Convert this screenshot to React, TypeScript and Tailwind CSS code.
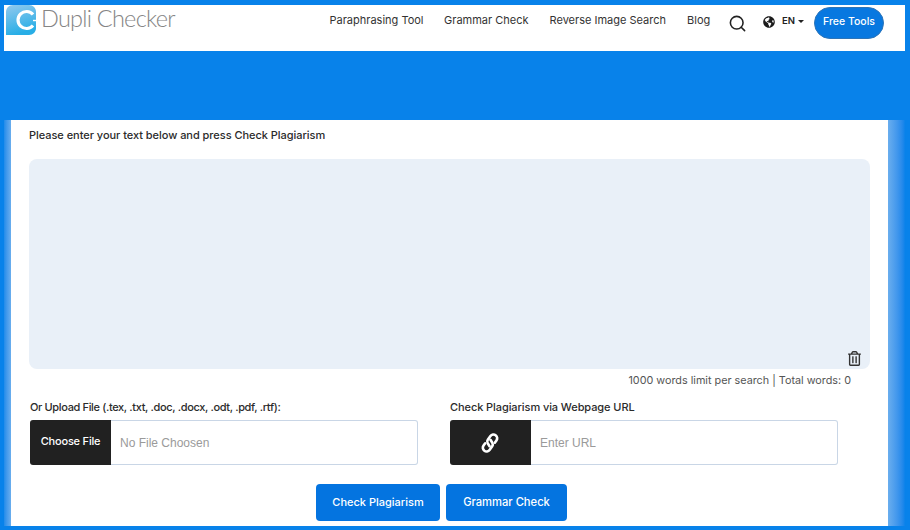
import { Search } from 'lucide-react'
import { FaGlobeAmericas, FaRegTrashAlt } from 'react-icons/fa'

const navLinks = [
  { label: 'Paraphrasing Tool', width: 'w-[96px]' },
  { label: 'Grammar Check', width: 'w-[87px]' },
  { label: 'Reverse Image Search', width: 'w-[119px]' },
  { label: 'Blog', width: 'w-[23px]' },
]

function Logo() {
  return (
    <div className="flex items-start gap-[5px] pl-[2px]">
      <svg width="30" height="30" viewBox="0 0 30 30" aria-hidden="true">
        <defs>
          <linearGradient id="logoBg" x1="0" y1="0" x2="0.3" y2="1">
            <stop offset="0" stopColor="#93c9ee" />
            <stop offset="1" stopColor="#28aee6" />
          </linearGradient>
        </defs>
        <path d="M7 0H23C27 0 30 3 30 7V23C30 27 27 30 23 30H0V7C0 3 3 0 7 0Z" fill="url(#logoBg)" />
        <path d="M27 9.5A8.5 8.5 0 1 0 27 20.5" fill="none" stroke="#fff" strokeWidth="3.2" />
        <path d="M27 15.5H30" stroke="#fff" strokeWidth="1.4" />
      </svg>
      <span className="-mt-[2px] font-['Lato',sans-serif] text-[23.5px] leading-[30px] font-light tracking-[-0.75px] text-[#858585]">
        Dupli Checker
      </span>
    </div>
  )
}

function LinkIcon() {
  return (
    <svg width="24" height="24" viewBox="-11 -11 22 22" className="-translate-x-[1px]" aria-hidden="true">
      <g transform="rotate(36)" fill="none" stroke="#fff" strokeWidth="2.4" strokeLinecap="round" strokeLinejoin="round">
        <path d="M1.4 2.6L-1.6 1.4Q-3.4 0.6 -3.4 -1.2V-5.4a3.4 3.4 0 0 1 6.8 0V-2.8" />
        <path d="M-1.4 -2.6L1.6 -1.4Q3.4 -0.6 3.4 1.2V5.4a3.4 3.4 0 0 1 -6.8 0V2.8" />
      </g>
    </svg>
  )
}

function Header() {
  return (
    <header className="ml-[4px] flex h-[46px] w-[901px] items-start bg-white">
      <Logo />
      <nav className="ml-auto flex items-center pt-[2px]">
        <ul className="flex h-[26px] items-center gap-[18.5px] self-start text-[11px] text-[#333333]">
          {navLinks.map((link) => (
            <li key={link.label} className={`${link.width} whitespace-nowrap`}>
              {link.label}
            </li>
          ))}
        </ul>
        <Search className="ml-[18px] h-[19px] w-[19px] text-[#222222]" strokeWidth={2} />
        <div className="flex h-[29px] items-center self-start">
          <FaGlobeAmericas className="ml-[16px] h-[12px] w-[12px] text-[#1c1c1c]" />
          <span className="ml-[7px] text-[9.5px] font-semibold text-[#222222]">EN</span>
          <span className="ml-[3px] h-0 w-0 border-x-[3px] border-t-[3px] border-x-transparent border-t-[#222222]" />
        </div>
        <button className="mr-[21px] ml-[10px] h-[32px] w-[70px] rounded-full border border-[#2d74b8] bg-[#0878e0] pb-[3px] text-[10.5px] font-medium text-white">
          Free Tools
        </button>
      </nav>
    </header>
  )
}

function FileField() {
  return (
    <div className="w-[388px]">
      <label className="block text-[11px] leading-[14px] font-medium tracking-[-0.35px] text-[#2b2b2b]">
        Or Upload File (.tex, .txt, .doc, .docx, .odt, .pdf, .rtf):
      </label>
      <div className="mt-[6px] flex h-[45px]">
        <button className="w-[81px] rounded-l-[3px] bg-[#212121] pb-[2px] text-[11px] font-medium tracking-[-0.2px] text-white">
          Choose File
        </button>
        <span className="flex flex-1 items-center rounded-r-[3px] border-y border-r border-[#c9d6e6] pl-[9px] font-['Liberation_Sans',sans-serif] text-[12px] text-[#9a9a9a]">
          No File Choosen
        </span>
      </div>
    </div>
  )
}

function UrlField() {
  return (
    <div className="w-[388px]">
      <label className="block text-[11px] leading-[14px] font-medium tracking-[-0.08px] text-[#2b2b2b]">
        Check Plagiarism via Webpage URL
      </label>
      <div className="mt-[6px] flex h-[45px]">
        <div className="flex w-[81px] items-center justify-center rounded-l-[3px] bg-[#212121]">
          <LinkIcon />
        </div>
        <input
          placeholder="Enter URL"
          className="min-w-0 flex-1 rounded-r-[3px] border-y border-r border-[#c9d6e6] pl-[9px] font-['Liberation_Sans',sans-serif] text-[12px] outline-none placeholder:text-[#9a9a9a]"
        />
      </div>
    </div>
  )
}

export default function App() {
  return (
    <div className="h-[530px] w-[910px] overflow-hidden bg-[#0882ea] pt-[5px] font-['Inter',sans-serif]">
      <Header />
      <div className="mt-[69px] ml-[4px] flex h-[406px] w-[901px]">
        <div className="w-[7px] bg-gradient-to-r from-[#1f8bea] to-[#6aaeee]" />
        <main className="w-[877px] bg-white pt-[8px]">
          <p className="ml-[18px] text-[11px] leading-[14px] font-medium tracking-[-0.04px] text-[#2b2b2b]">
            Please enter your text below and press Check Plagiarism
          </p>
          <div className="relative mt-[17px] ml-[18px] h-[210px] w-[841px]">
            <textarea className="h-full w-full resize-none rounded-lg bg-[#e9f0f8] outline-none" />
            <FaRegTrashAlt className="absolute right-[9px] bottom-[3px] h-[15px] w-[13px] text-[#333333]" />
          </div>
          <p className="mt-[5px] mr-[37px] text-right text-[10.8px] leading-[14px] text-[#555555]">
            1000 words limit per search | Total words: 0
          </p>
          <div className="mt-[12px] ml-[19px] flex gap-[32px]">
            <FileField />
            <UrlField />
          </div>
          <div className="mt-[19px] ml-[305px] flex gap-[6px]">
            <button className="h-[37px] w-[124px] rounded-[4px] bg-[#0474e0] text-[11px] font-medium text-white">
              Check Plagiarism
            </button>
            <button className="h-[37px] w-[121px] rounded-[4px] bg-[#0474e0] text-[11.2px] font-medium text-white">
              Grammar Check
            </button>
          </div>
        </main>
        <div className="w-[17px] bg-gradient-to-r from-[#6aaeee] to-[#0882ea]" />
      </div>
    </div>
  )
}
